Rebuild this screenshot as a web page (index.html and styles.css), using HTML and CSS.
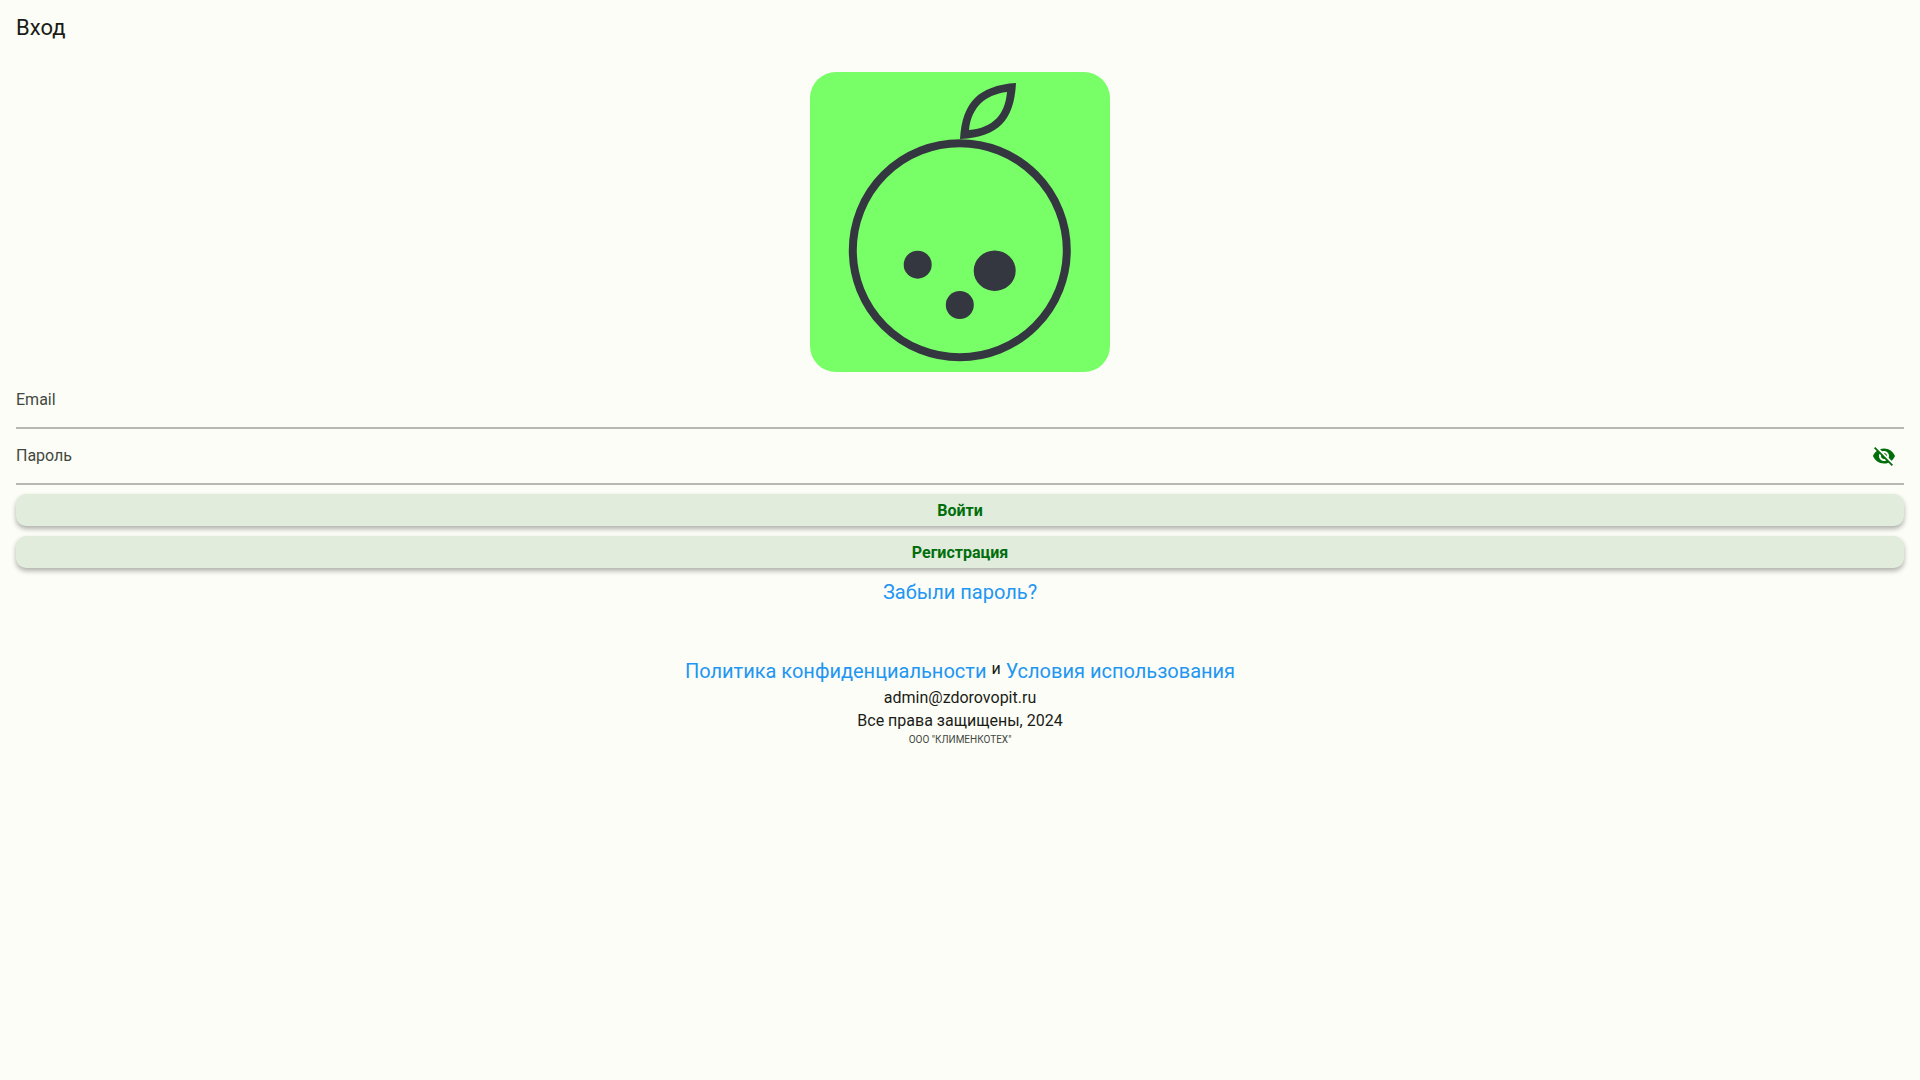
FILE: index.html
```html
<!DOCTYPE html>
<html lang="ru">
<head>
<meta charset="utf-8">
<meta name="viewport" content="width=device-width, initial-scale=1">
<title>Вход</title>
<link rel="stylesheet" href="styles.css">
</head>
<body>
<header class="app-bar">
  <h1 class="app-title">Вход</h1>
</header>
<main class="page">
  <svg class="logo" viewBox="0 0 300 300" aria-hidden="true">
    <rect width="300" height="300" rx="26" fill="#78ff68"/>
    <g fill="#353740">
      <path fill-rule="evenodd" d="M150 67C151 48 156 35 165 26C173 18 187 12 206 11C205 31 200 44 192 52C183 61 170 66 150 67ZM159 58C171 57 180 53 186.500 46.500C192 41 196 32 197 20C186 21 176 26 170.500 31.500C165 37 160 46 159 58Z"/>
      <circle cx="107.700" cy="192.700" r="14"/>
      <ellipse cx="184.700" cy="198.700" rx="21" ry="20.200"/>
      <circle cx="149.800" cy="233" r="14"/>
    </g>
    <circle cx="149.800" cy="178.300" r="107" fill="none" stroke="#353740" stroke-width="8"/>
  </svg>
  <form class="login">
    <div class="field">
      <label class="field-label" for="email">Email</label>
      <input class="field-input" id="email" type="email">
    </div>
    <div class="field">
      <label class="field-label" for="password">Пароль</label>
      <input class="field-input" id="password" type="password">
      <button class="icon-button" type="button" aria-label="Показать пароль">
        <svg class="icon" viewBox="0 0 24 24" aria-hidden="true"><path fill="currentColor" d="M12 7c2.76 0 5 2.24 5 5 0 .65-.13 1.26-.36 1.83l2.92 2.92c1.51-1.26 2.7-2.89 3.43-4.75-1.73-4.39-6-7.5-11-7.5-1.4 0-2.74.25-3.98.7l2.16 2.16C10.74 7.13 11.35 7 12 7zM2 4.27l2.28 2.28.46.46C3.08 8.3 1.78 10.02 1 12c1.73 4.39 6 7.5 11 7.5 1.55 0 3.03-.3 4.38-.84l.42.42L19.73 22 21 20.73 3.27 3 2 4.27zM7.53 9.8l1.55 1.55c-.05.21-.08.43-.08.65 0 1.66 1.34 3 3 3 .22 0 .44-.03.65-.08l1.55 1.55c-.67.33-1.41.53-2.2.53-2.76 0-5-2.24-5-5 0-.79.2-1.53.53-2.2zm4.31-.78l3.15 3.15.02-.16c0-1.66-1.34-3-3-3l-.17.01z"/></svg>
      </button>
    </div>
    <div class="actions">
      <button class="button" type="submit">Войти</button>
      <button class="button" type="button">Регистрация</button>
    </div>
  </form>
  <a class="link" href="#">Забыли пароль?</a>
  <footer class="footer">
    <p class="legal"><a class="link" href="#">Политика конфиденциальности</a> <span>и</span> <a class="link" href="#">Условия использования</a></p>
    <p class="line">admin@zdorovopit.ru</p>
    <p class="line">Все права защищены, 2024</p>
    <p class="company">ООО "КЛИМЕНКОТЕХ"</p>
  </footer>
</main>
</body>
</html>
```
FILE: styles.css
```css
* {
  box-sizing: border-box;
}

body {
  margin: 0;
  background: #fcfdf6;
  color: #1a1c18;
  font: 16px/24px Roboto, "Noto Sans", sans-serif;
}

.app-bar {
  display: flex;
  align-items: center;
  height: 56px;
  padding: 0 16px;
}

.app-title {
  margin: 0;
  font-size: 22px;
  font-weight: 400;
  line-height: 28px;
}

.page {
  display: flex;
  flex-direction: column;
  align-items: center;
  padding: 16px;
}

.logo {
  width: 300px;
  height: 300px;
}

.login {
  width: 100%;
  padding-top: 1px;
}

.field {
  display: grid;
  grid-template-columns: 1fr 40px;
  align-items: center;
  height: 56px;
  border-bottom: 2px solid #b6b8b1;
}

.field-label,
.field-input {
  grid-area: 1 / 1;
}

.field-label {
  color: #43483f;
  pointer-events: none;
}

.field-input {
  width: 100%;
  height: 54px;
  padding: 0;
  border: 0;
  outline: 0;
  background: transparent;
  font: inherit;
}

.icon-button {
  display: grid;
  place-items: center;
  grid-area: 1 / 2;
  width: 40px;
  height: 40px;
  padding: 0;
  border: 0;
  background: transparent;
  color: #006e0a;
}

.icon {
  width: 24px;
  height: 24px;
}

.actions {
  display: grid;
  gap: 10px;
  padding: 9px 0 10px;
}

.button {
  height: 32px;
  padding: 1px 0 0;
  border: 0;
  border-radius: 10px;
  background: #e1ecdd;
  box-shadow: 0 3px 5px rgba(0, 0, 0, 0.3);
  color: #006e0a;
  font: 700 16px/24px Roboto, "Noto Sans", sans-serif;
}

.link {
  color: #2196f3;
  font-size: 20px;
  line-height: 28px;
  text-decoration: none;
}

.footer {
  padding-top: 51px;
  text-align: center;
}

.legal,
.line,
.company {
  margin: 0;
}

.legal {
  display: flex;
  flex-wrap: wrap;
  justify-content: center;
  gap: 5px;
  padding-bottom: 1px;
}

.line {
  line-height: 23px;
}

.company {
  color: #43483f;
  font-size: 10px;
  line-height: 16px;
}
```
